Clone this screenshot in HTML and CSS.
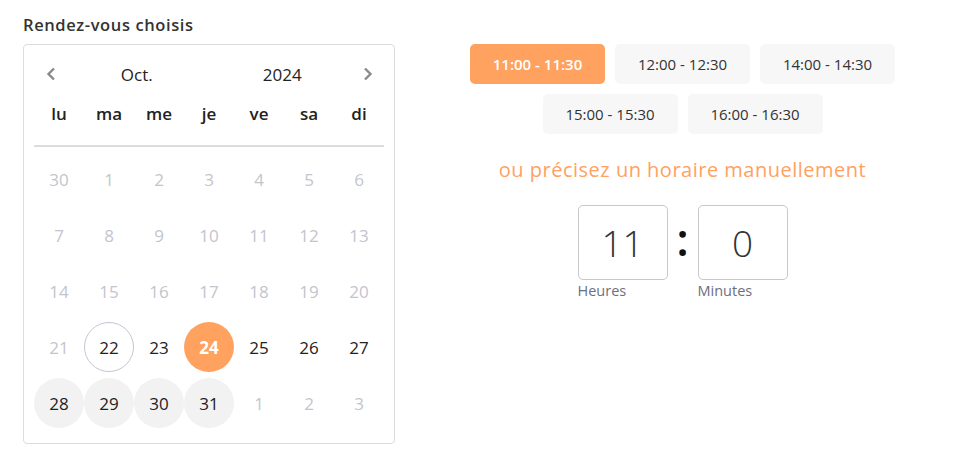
FILE: index.html
```html
<!DOCTYPE html>
<html lang="fr">

<head>
  <meta charset="UTF-8" />
  <meta name="viewport" content="width=device-width, initial-scale=1" />
  <title>Rendez-vous</title>
  <link rel="stylesheet" href="styles.css">
</head>

<body>

  <div class="layout">

    <!-- Calendar -->
    <div class="picker">
      <h3 class="title">Rendez-vous choisis</h3>
      <div class="calendar">
        <div class="cal-head">
          <span class="nav">
            <svg width="10" height="14" viewBox="0 0 10 14"><path d="M8 1.5 L2.5 7 L8 12.5" fill="none" stroke="#8a8a8a" stroke-width="2.4" /></svg>
          </span>
          <span class="cal-label">Oct.</span>
          <span class="cal-label">2024</span>
          <span class="nav">
            <svg width="10" height="14" viewBox="0 0 10 14"><path d="M2 1.5 L7.5 7 L2 12.5" fill="none" stroke="#8a8a8a" stroke-width="2.4" /></svg>
          </span>
        </div>
        <div class="weekdays">
          <span>lu</span><span>ma</span><span>me</span><span>je</span><span>ve</span><span>sa</span><span>di</span>
        </div>
        <div class="divider"></div>
        <div class="days">
          <span class="day muted">30</span>
          <span class="day muted">1</span>
          <span class="day muted">2</span>
          <span class="day muted">3</span>
          <span class="day muted">4</span>
          <span class="day muted">5</span>
          <span class="day muted">6</span>

          <span class="day muted">7</span>
          <span class="day muted">8</span>
          <span class="day muted">9</span>
          <span class="day muted">10</span>
          <span class="day muted">11</span>
          <span class="day muted">12</span>
          <span class="day muted">13</span>

          <span class="day muted">14</span>
          <span class="day muted">15</span>
          <span class="day muted">16</span>
          <span class="day muted">17</span>
          <span class="day muted">18</span>
          <span class="day muted">19</span>
          <span class="day muted">20</span>

          <span class="day muted">21</span>
          <span class="day today">22</span>
          <span class="day">23</span>
          <span class="day selected">24</span>
          <span class="day">25</span>
          <span class="day">26</span>
          <span class="day">27</span>

          <span class="day avail">28</span>
          <span class="day avail">29</span>
          <span class="day avail">30</span>
          <span class="day avail">31</span>
          <span class="day muted">1</span>
          <span class="day muted">2</span>
          <span class="day muted">3</span>
        </div>
      </div>
    </div>

    <!-- Time slots -->
    <div class="times">
      <div class="slots">
        <button class="slot active">11:00 - 11:30</button>
        <button class="slot">12:00 - 12:30</button>
        <button class="slot">14:00 - 14:30</button>
        <button class="slot">15:00 - 15:30</button>
        <button class="slot">16:00 - 16:30</button>
      </div>

      <p class="manual">ou précisez un horaire manuellement</p>

      <div class="clock">
        <div class="field">
          <input type="text" value="11" />
          <label>Heures</label>
        </div>
        <span class="colon">:</span>
        <div class="field">
          <input type="text" value="0" />
          <label>Minutes</label>
        </div>
      </div>
    </div>

  </div>

</body>

</html>
```

FILE: styles.css
```css
* {
  box-sizing: border-box;
}

body {
  margin: 0;
  background: #fff;
  color: #222;
  font-family: 'Open Sans', 'Noto Sans', sans-serif;
}

.layout {
  display: flex;
  padding: 14px 0 0 23px;
}

/* Calendar */
.picker {
  width: 372px;
}

.title {
  margin: 0 0 8px;
  font-size: 16.5px;
  font-weight: 600;
  letter-spacing: 0.6px;
  color: #333;
  line-height: 22px;
}

.calendar {
  border: 1px solid #dcdcdf;
  border-radius: 4px;
  padding: 10px 10px 12px;
}

.cal-head {
  display: flex;
  align-items: center;
  height: 38px;
  padding: 0 11px 0 12px;
}

.nav {
  display: flex;
  align-items: center;
}

.cal-head .nav:first-child {
  margin-right: 8px;
}

.cal-head .nav:last-child {
  margin-left: 8px;
}

.cal-label {
  flex: 1;
  text-align: center;
  font-size: 17px;
  color: #222;
}

.weekdays {
  display: grid;
  grid-template-columns: repeat(7, 50px);
  height: 40px;
  align-items: center;
  text-align: center;
  font-size: 17px;
  font-weight: 600;
  color: #222;
}

.divider {
  height: 2px;
  margin-top: 12px;
  background: #dcdcdc;
}

.days {
  display: grid;
  grid-template-columns: repeat(7, 50px);
  grid-auto-rows: 56px;
  margin-top: 4px;
  align-items: center;
}

.day {
  width: 50px;
  height: 50px;
  border-radius: 50%;
  display: flex;
  align-items: center;
  justify-content: center;
  font-size: 17px;
  color: #222;
}

.day.muted {
  color: #c3c5cd;
}

.day.today {
  border: 1px solid #c3c6d2;
}

.day.selected {
  background: #ffa15f;
  color: #fff;
  font-weight: 700;
}

.day.avail {
  background: #f2f2f2;
}

/* Time slots */
.times {
  flex: 1;
  display: flex;
  flex-direction: column;
  align-items: center;
  padding: 30px 0 0 4px;
}

.slots {
  width: 425px;
  display: flex;
  flex-wrap: wrap;
  justify-content: center;
  gap: 10px;
}

.slot {
  width: 135px;
  height: 40px;
  border: none;
  border-radius: 5px;
  background: #f7f7f7;
  color: #333;
  font-family: inherit;
  font-size: 15px;
}

.slot.active {
  background: #ffa15f;
  color: #fff;
  font-weight: 600;
}

.manual {
  margin: 24px 0 0;
  font-size: 20px;
  line-height: 24px;
  letter-spacing: 0.5px;
  color: #ffa15f;
}

.clock {
  display: flex;
  align-items: flex-start;
  margin-top: 23px;
}

.field {
  display: flex;
  flex-direction: column;
}

.field input {
  width: 90px;
  height: 75px;
  border: 1px solid #c8c8cc;
  border-radius: 5px;
  text-align: center;
  font-family: inherit;
  font-size: 37px;
  font-weight: 300;
  color: #333;
  outline: none;
}

.field label {
  margin-top: 2px;
  font-size: 14.5px;
  line-height: 18px;
  color: #6b7080;
}

.colon {
  width: 30px;
  height: 75px;
  display: flex;
  align-items: center;
  justify-content: center;
  font-size: 46px;
  font-weight: 600;
  color: #111;
  padding-bottom: 10px;
}
```
